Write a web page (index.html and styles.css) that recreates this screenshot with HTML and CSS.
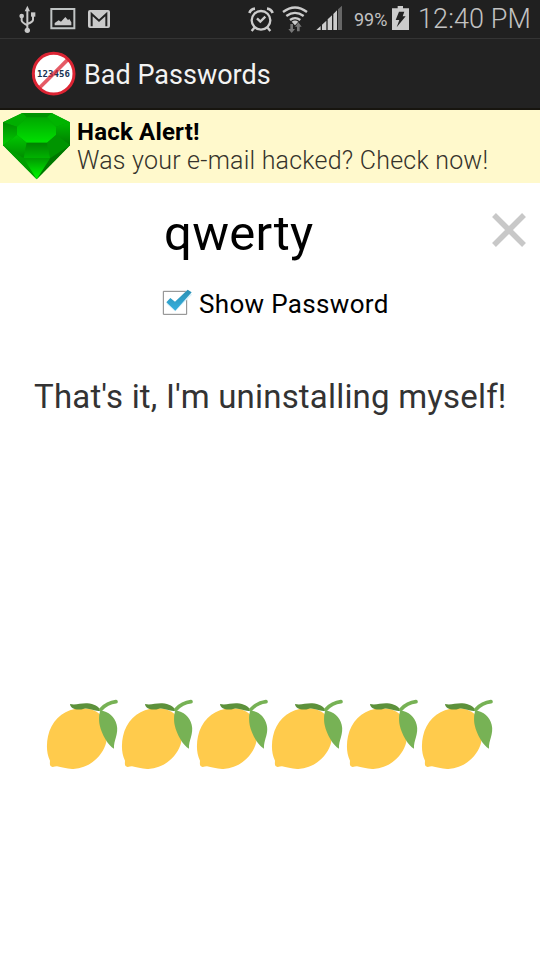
FILE: index.html
```html
<!DOCTYPE html>
<html lang="en">
<head>
<meta charset="utf-8">
<title>Bad Passwords</title>
<link rel="stylesheet" href="styles.css">
</head>
<body>
<svg class="defs" aria-hidden="true">
  <defs>
    <linearGradient id="tick" x1="0" y1="0" x2="0" y2="1"><stop offset="0" stop-color="#2a8fb3"/><stop offset="1" stop-color="#35b0df"/></linearGradient>
    <linearGradient id="gemTable" x1="0" y1="0" x2="0" y2="1"><stop offset="0" stop-color="#00a800"/><stop offset="1" stop-color="#00e000"/></linearGradient>
    <linearGradient id="gemLeft" x1="0" y1="0" x2="0" y2="1"><stop offset="0" stop-color="#008a00"/><stop offset="1" stop-color="#00cc00"/></linearGradient>
    <linearGradient id="gemRight" x1="0" y1="0" x2="0" y2="1"><stop offset="0" stop-color="#00b800"/><stop offset="1" stop-color="#007c00"/></linearGradient>
    <linearGradient id="gemFront" x1="0" y1="0" x2="0" y2="1"><stop offset="0" stop-color="#008100"/><stop offset="1" stop-color="#00b400"/></linearGradient>
    <linearGradient id="gemLowerLeft" x1="0" y1="0" x2="0" y2="1"><stop offset="0" stop-color="#00c800"/><stop offset="1" stop-color="#008c00"/></linearGradient>
    <linearGradient id="gemPoint" x1="0" y1="0" x2="0" y2="1"><stop offset="0" stop-color="#009a00"/><stop offset=".8" stop-color="#00ea00"/></linearGradient>
    <symbol id="lemon" viewBox="15 24 225 216">
      <path fill="#ffcb4c" d="M30 212C19 191 19 162 24 139C33 95 66 64 104 57C136 51 173 57 186 82C199 105 205 142 196 166C181 206 145 234 100 237C82 238 64 231 51 229C44 229 38 233 33 229C28 225 30 217 30 212Z"/>
      <path fill="#77b255" d="M181 62C206 63 224 80 230 104C237 132 220 151 222 176C205 167 185 134 179 105C176 88 177 71 181 62Z"/>
      <path fill="#5c913b" d="M90 42C107 46 122 39 142 40C162 41 176 50 183 62C164 66 151 53 132 56C116 61 92 60 90 42Z"/>
      <path fill="none" stroke="#77b255" stroke-width="11" stroke-linecap="round" d="M182 59C192 48 208 37 228 35"/>
    </symbol>
  </defs>
</svg>
<header class="status">
  <svg class="usb" viewBox="54 12 60 90"><g fill="none" stroke="#c8c8c8" stroke-width="6"><path d="M82 28V90M65 50V62Q66 68 82 76M99 46V60Q98 66 82 72"/></g><g fill="#c8c8c8"><path d="M82 17L90 34H74Z"/><circle cx="65" cy="48" r="7"/><path d="M93 37H106V50H93Z"/><circle cx="82" cy="91" r="8"/></g></svg>
  <svg class="photo" viewBox="150 21 78 69"><path fill="none" stroke="#c0c4c4" stroke-width="6" d="M154 27H223V85H154Z"/><path fill="#c8c8c8" d="M164 76V69L176 61L183 65L196 51L204 60L208 57L214 67V76Z"/></svg>
  <svg class="mail" viewBox="261 27 72 60"><rect x="264" y="30" width="66" height="54" rx="6" fill="#cacaca"/><path fill="none" stroke="#222" stroke-width="6" d="M275 79V42L297 62L319 42V79"/></svg>
  <span class="grow"></span>
  <svg class="alarm" viewBox="24 18 78 81"><g fill="none" stroke="#ccc" stroke-width="7"><circle cx="63" cy="61" r="28"/><path d="M51 55L61 65L76 50M43 83L35 93M83 83L91 93"/><path stroke-width="8" d="M28 39Q33 27 45 26M81 26Q93 27 98 39"/></g></svg>
  <svg class="wifi" viewBox="123 18 81 84"><g fill="none" stroke="#ccc" stroke-width="7"><path d="M129 36Q165 9 201 36M139 48Q165 29 191 48M150 60Q165 49 181 60"/></g><path fill="#ccc" d="M155 65Q165 58 175 65L165 76Z"/><path fill="#777" d="M151 72H159V87H165L155 99L145 87H151ZM171 94V80H165L175 67L185 80H179V94Z"/></svg>
  <svg class="signal" viewBox="228 15 81 78"><g fill="#ccc"><path d="M229 90L242 78V90ZM246 74L259 62V90H246ZM263 58L276 46V90H263ZM280 42L291 31V90H280Z"/><path fill="#666" d="M294 28L306 17V90H294Z"/></g></svg>
  <span class="percent">99%</span>
  <svg class="battery" viewBox="33 15 57 78"><path fill="#ccc" d="M36 25H53V18H69V25H87V90H36Z"/><path fill="#222" d="M57 35H73L68 49H77L50 82L58 60H47Z"/></svg>
  <span class="clock">12:40 PM</span>
</header>
<div class="appbar">
  <div class="logo">
    <svg class="logo-layer" viewBox="93 45 135 135"><circle cx="161" cy="113" r="61" fill="#fff" stroke="#dc2433" stroke-width="9"/></svg>
    <span class="logo-text">123456</span>
    <svg class="logo-layer" viewBox="93 45 135 135"><path stroke="#dc2433" stroke-opacity=".75" stroke-width="11" d="M118 156L204 70"/></svg>
  </div>
  <h1 class="title">Bad Passwords</h1>
</div>
<section class="alert">
  <svg class="gem" viewBox="6 6 207 207">
    <path fill="#009a00" d="M67 9H155L210 37V106L110 208L9 106V37Z"/>
    <path fill="#009400" d="M67 9H155L141 22H80Z"/>
    <path fill="#00ae00" d="M67 9L80 22L51 50L9 37Z"/>
    <path fill="#00b400" d="M155 9L141 22L168 50L210 37Z"/>
    <path fill="url(#gemLeft)" d="M9 37L51 50V75L9 106Z"/>
    <path fill="url(#gemRight)" d="M210 37L168 50V75L210 106Z"/>
    <path fill="url(#gemTable)" d="M80 22H141L168 50V75L141 98H80L51 75V50Z"/>
    <path fill="url(#gemLowerLeft)" d="M9 106L51 75L80 98L71 145Z"/>
    <path fill="#009400" d="M210 106L168 75L141 98L150 145Z"/>
    <path fill="url(#gemFront)" d="M80 98H141L150 145H71Z"/>
    <path fill="#009e00" d="M9 106L71 145L110 208Z"/>
    <path fill="#007800" d="M210 106L150 145L110 208Z"/>
    <path fill="url(#gemPoint)" d="M71 145H150L110 208Z"/>
  </svg>
  <div class="alert-copy"><strong class="alert-title">Hack Alert!</strong><span class="alert-text">Was your e-mail hacked? Check now!</span></div>
</section>
<main class="content">
  <div class="entry">
    <span class="password">qwerty</span>
    <svg class="clear" viewBox="0 0 34 34"><path d="M2 2L32 32M32 2L2 32" fill="none" stroke="#c8c8c8" stroke-width="5.5"/></svg>
  </div>
  <div class="option">
    <svg class="check" viewBox="36 279 93 84"><path fill="#fff" stroke="#858585" stroke-width="3" d="M40 289H110V358H40Z"/><path fill="none" stroke="#d9f1fa" stroke-width="20" d="M56 319L75 336L119 292"/><path fill="url(#tick)" d="M49 322L61 309L75 320L113 284L125 292L76 347Z"/></svg>
    <span class="option-label">Show Password</span>
  </div>
  <p class="message">That's it, I'm uninstalling myself!</p>
  <div class="rating">
    <svg class="lemon"><use href="#lemon"/></svg><svg class="lemon"><use href="#lemon"/></svg><svg class="lemon"><use href="#lemon"/></svg><svg class="lemon"><use href="#lemon"/></svg><svg class="lemon"><use href="#lemon"/></svg><svg class="lemon"><use href="#lemon"/></svg>
  </div>
</main>
</body>
</html>
```
FILE: styles.css
```css
* { box-sizing: border-box; }
body { margin: 0; width: 540px; height: 960px; overflow: hidden; background: #fff; font-family: Roboto, sans-serif; color: #000; }
svg { display: block; flex: none; }
span, strong, h1, p { white-space: nowrap; }
.defs { position: absolute; width: 0; height: 0; }
.status { display: flex; align-items: flex-start; height: 38px; padding-left: 18px; background: #202020; color: #c2c2c2; }
.grow { flex: 1; }
.usb { width: 20px; height: 30px; margin-top: 4px; }
.photo { width: 26px; height: 23px; margin: 7px 0 0 12px; }
.mail { width: 24px; height: 20px; margin: 9px 0 0 11px; }
.alarm { width: 26px; height: 27px; margin: 6px 7px 0 0; }
.wifi { width: 27px; height: 28px; margin: 6px 8px 0 0; }
.signal { width: 27px; height: 26px; margin: 5px 11px 0 0; }
.percent { width: 37px; font-size: 18px; line-height: 40px; }
.battery { width: 19px; height: 26px; margin-top: 5px; }
.clock { width: 130px; padding-left: 8px; font-size: 27px; font-weight: 300; line-height: 38px; letter-spacing: .1px; }
.appbar { display: flex; align-items: center; height: 72px; padding: 0 0 0 31px; border-top: 1px solid #343434; border-bottom: 2px solid #17150f; background: #222; }
.logo { display: grid; place-items: center; width: 45px; height: 45px; }
.logo > * { grid-area: 1 / 1; }
.logo-layer { width: 45px; height: 45px; }
.logo-text { font: bold 9px/12px "DejaVu Sans Mono", monospace; color: #173353; letter-spacing: .1px; }
.title { margin: 2px 0 0 8px; font-size: 27px; font-weight: 400; line-height: 32px; color: #f3f3f3; }
.alert { display: flex; height: 73px; padding: 2px 0 0 2px; background: #fff9cc; }
.gem { width: 69px; height: 69px; }
.alert-copy { display: flex; flex-direction: column; padding: 6px 0 0 6px; font-size: 24px; line-height: 29px; }
.alert-title { font-weight: 700; letter-spacing: .2px; }
.alert-text { margin-top: -1px; font-size: 25px; font-weight: 300; letter-spacing: .22px; color: #35332b; }
.content { display: flex; flex-direction: column; }
.entry { display: flex; height: 100px; padding: 22px 14.5px 0 164px; justify-content: space-between; }
.password { font-size: 49px; line-height: 58px; letter-spacing: .3px; }
.clear { width: 34px; height: 34px; margin-top: 8px; }
.option { display: flex; height: 42px; padding: 5px 0 0 162px; }
.check { width: 31px; height: 28px; }
.option-label { margin-left: 6px; font-size: 26px; line-height: 32px; letter-spacing: .33px; }
.message { margin: 51px 0 0 34px; font-size: 33px; line-height: 42px; letter-spacing: .19px; color: #333; }
.rating { display: flex; margin: 280px 0 0 45px; }
.lemon { width: 75px; height: 72px; }
```
